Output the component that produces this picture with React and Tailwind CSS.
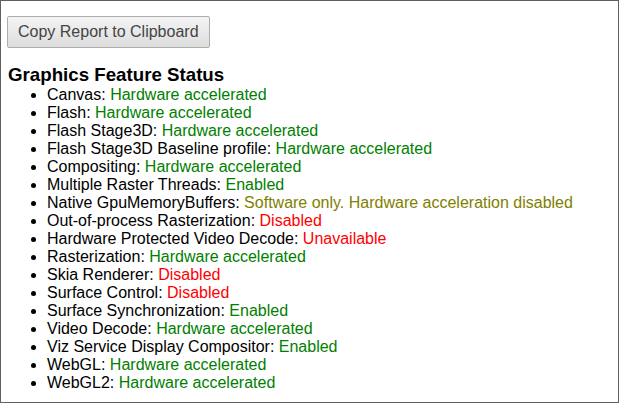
import React from 'react'

const FEATURES = [
  { name: 'Canvas', status: 'Hardware accelerated', tone: 'green' },
  { name: 'Flash', status: 'Hardware accelerated', tone: 'green' },
  { name: 'Flash Stage3D', status: 'Hardware accelerated', tone: 'green' },
  { name: 'Flash Stage3D Baseline profile', status: 'Hardware accelerated', tone: 'green' },
  { name: 'Compositing', status: 'Hardware accelerated', tone: 'green' },
  { name: 'Multiple Raster Threads', status: 'Enabled', tone: 'green' },
  { name: 'Native GpuMemoryBuffers', status: 'Software only. Hardware acceleration disabled', tone: 'yellow' },
  { name: 'Out-of-process Rasterization', status: 'Disabled', tone: 'red' },
  { name: 'Hardware Protected Video Decode', status: 'Unavailable', tone: 'red' },
  { name: 'Rasterization', status: 'Hardware accelerated', tone: 'green' },
  { name: 'Skia Renderer', status: 'Disabled', tone: 'red' },
  { name: 'Surface Control', status: 'Disabled', tone: 'red' },
  { name: 'Surface Synchronization', status: 'Enabled', tone: 'green' },
  { name: 'Video Decode', status: 'Hardware accelerated', tone: 'green' },
  { name: 'Viz Service Display Compositor', status: 'Enabled', tone: 'green' },
  { name: 'WebGL', status: 'Hardware accelerated', tone: 'green' },
  { name: 'WebGL2', status: 'Hardware accelerated', tone: 'green' },
]

const TONES = {
  green: 'text-[#008000]',
  yellow: 'text-[#808000]',
  red: 'text-[#ff0000]',
}

export default function App() {
  return (
    <div className="w-[619px] h-[403px] border border-[#5f5f5f] bg-white text-black font-['Liberation_Sans',Arial,sans-serif] text-[16px] leading-[18px] overflow-hidden">
      <div className="pt-[15px] pl-[6px]">
        <button className="h-[32px] px-[10px] text-[16px] text-[#444] border border-[#adadad] rounded-[2px] bg-gradient-to-b from-[#f4f4f4] to-[#dddddd]">
          Copy Report to Clipboard
        </button>
      </div>

      <h3 className="mt-[16px] ml-[7px] text-[18.72px] leading-[22px] font-bold">Graphics Feature Status</h3>

      <ul className="pl-[46px] list-disc">
        {FEATURES.map(f => (
          <li key={f.name}>
            {f.name}: <span className={TONES[f.tone]}>{f.status}</span>
          </li>
        ))}
      </ul>
    </div>
  )
}
